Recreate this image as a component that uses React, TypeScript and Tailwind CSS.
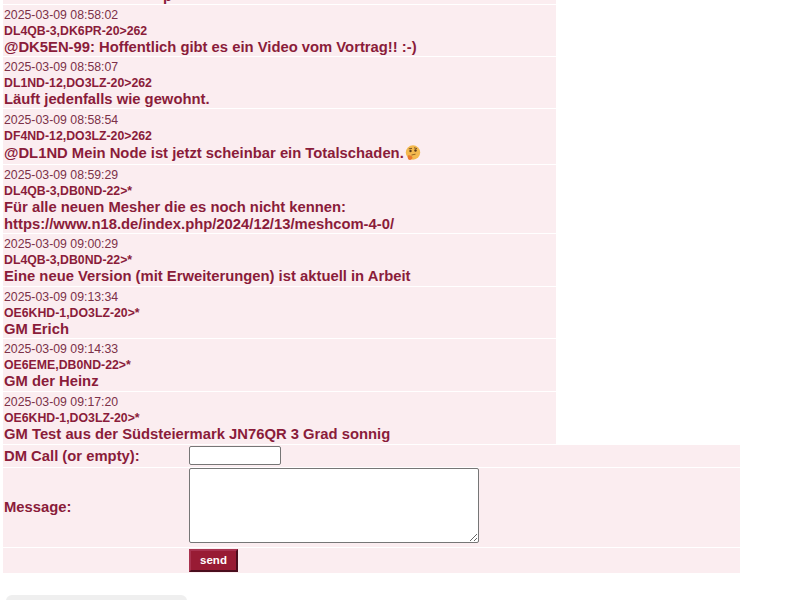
const messages = [
  {
    time: "2025-03-09 08:58:02",
    path: "DL4QB-3,DK6PR-20>262",
    lines: ["@DK5EN-99: Hoffentlich gibt es ein Video vom Vortrag!! :-)"],
    h: "h-[51px]",
  },
  {
    time: "2025-03-09 08:58:07",
    path: "DL1ND-12,DO3LZ-20>262",
    lines: ["Läuft jedenfalls wie gewohnt."],
    h: "h-[51px]",
  },
  {
    time: "2025-03-09 08:58:54",
    path: "DF4ND-12,DO3LZ-20>262",
    lines: ["@DL1ND Mein Node ist jetzt scheinbar ein Totalschaden."],
    emoji: true,
    h: "h-[55px]",
  },
  {
    time: "2025-03-09 08:59:29",
    path: "DL4QB-3,DB0ND-22>*",
    lines: [
      "Für alle neuen Mesher die es noch nicht kennen:",
      "https://www.n18.de/index.php/2024/12/13/meshcom-4-0/",
    ],
    h: "h-[68px]",
  },
  {
    time: "2025-03-09 09:00:29",
    path: "DL4QB-3,DB0ND-22>*",
    lines: ["Eine neue Version (mit Erweiterungen) ist aktuell in Arbeit"],
    h: "h-[52px]",
  },
  {
    time: "2025-03-09 09:13:34",
    path: "OE6KHD-1,DO3LZ-20>*",
    lines: ["GM Erich"],
    h: "h-[51px]",
  },
  {
    time: "2025-03-09 09:14:33",
    path: "OE6EME,DB0ND-22>*",
    lines: ["GM der Heinz"],
    h: "h-[52px]",
  },
  {
    time: "2025-03-09 09:17:20",
    path: "OE6KHD-1,DO3LZ-20>*",
    lines: ["GM Test aus der Südsteiermark JN76QR 3 Grad sonnig"],
    h: "h-[52px]",
  },
];

function ThinkingFace() {
  return (
    <svg viewBox="0 0 16 16" className="ml-[1px] inline-block h-4 w-4 align-[-3px]">
      <circle cx="8" cy="7.5" r="7.2" fill="#f3b94e" />
      <circle cx="5.5" cy="6" r="1.2" fill="#5b3a1a" />
      <circle cx="10.5" cy="5.5" r="1.2" fill="#5b3a1a" />
      <path d="M3.8 3.8 L7 3.4 M9 2.8 L12 3.6" stroke="#5b3a1a" strokeWidth="0.8" fill="none" />
      <path d="M6.5 10 L10.5 9.2" stroke="#8a5a20" strokeWidth="0.9" fill="none" />
      <path d="M3 10.5 C5 10 7 11 7.5 12.5 C7.5 14.5 5 15.5 3.5 14.5 C2.5 13.5 2.5 11.5 3 10.5 Z" fill="#ea7a2e" />
    </svg>
  );
}

function Message({ time, path, lines, emoji, h }: (typeof messages)[number] & { emoji?: boolean }) {
  return (
    <div className={`${h} bg-[#fbedf0] pl-[1px] ${emoji ? "pt-[3px]" : "pt-[2px]"}`}>
      <div className="text-[12.3px] leading-[16px] text-[#7c3148]">{time}</div>
      <div className="text-[12.3px] leading-[16px] font-bold text-[#8a1c3a]">{path}</div>
      {lines.map((line) => (
        <div key={line} className={`text-[14.8px] leading-[17px] font-bold text-[#8a1c3a] ${emoji ? "mt-[1px]" : ""}`}>
          {line}
          {emoji && <ThinkingFace />}
        </div>
      ))}
    </div>
  );
}

export default function App() {
  return (
    <div className="h-[600px] w-[800px] overflow-hidden bg-white font-['Liberation_Sans',Arial,sans-serif]">
      <div className="ml-[3px] flex w-[553px] flex-col gap-[1px]">
        <div className="h-[4px] overflow-hidden bg-[#fbedf0] pl-[160px]">
          <div className="-mt-[12px] text-[14.8px] leading-[17px] font-bold text-[#8a1c3a]">p</div>
        </div>
        {messages.map((m) => (
          <Message key={m.time} {...m} />
        ))}
      </div>

      <div className="mt-[1px] ml-[3px] flex w-[737px] flex-col gap-[1px] text-[14.8px] font-bold text-[#8a1c3a]">
        <div className="flex h-[22px] items-start bg-[#fbedf0] pt-[1px]">
          <div className="w-[186px] pl-[1px] leading-[20px]">DM Call (or empty):</div>
          <input type="text" className="h-[19px] w-[92px] rounded-[2px] border border-[#767676] bg-white" />
        </div>
        <div className="flex h-[79px] items-start bg-[#fbedf0]">
          <div className="w-[186px] self-center pl-[1px]">Message:</div>
          <textarea className="block h-[75px] w-[290px] rounded-[2px] border border-[#767676] bg-white" />
        </div>
        <div className="flex h-[25px] items-end bg-[#fbedf0] pl-[186px]">
          <button className="mb-[1px] h-[23px] w-[49px] border-2 border-t-[#a8324f] border-r-[#4a0d1d] border-b-[#4a0d1d] border-l-[#a8324f] bg-[#981b34] text-[11.5px] leading-none font-bold text-white">
            send
          </button>
        </div>
      </div>

      <div className="mt-[22px] ml-[6px] h-[20px] w-[181px] rounded-[6px] bg-[#efefef]" />
    </div>
  );
}
